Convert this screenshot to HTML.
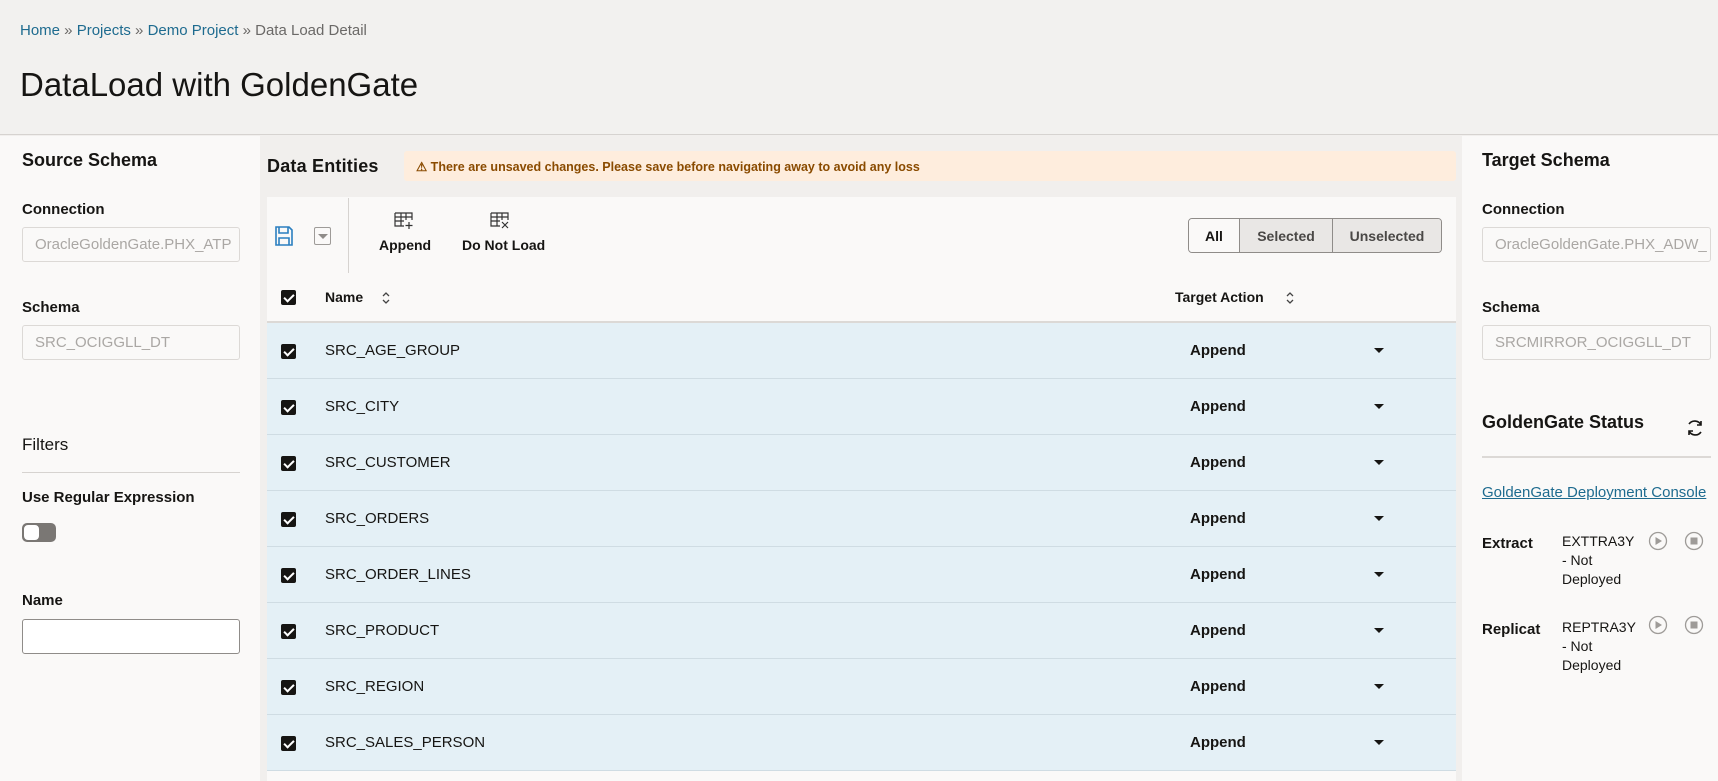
<!DOCTYPE html>
<html><head><meta charset="utf-8"><style>
*{box-sizing:border-box;margin:0;padding:0}
body{width:1718px;height:781px;overflow:hidden;font-family:"Liberation Sans",Arial,sans-serif;background:#f1efed;color:#161513;position:relative}
.abs{position:absolute}
.hdr{left:0;top:0;width:1718px;height:135px;background:#f2f1ef;border-bottom:1px solid #d6d3d0}
.bc{left:20px;top:22px;font-size:15px;color:#6b6967}
.bc a{color:#1e6b8f;text-decoration:none}
h1{position:absolute;left:20px;top:66px;font-size:33px;font-weight:normal;color:#161513}
.lp{left:0;top:136px;width:260px;height:645px;background:#faf9f8}
.rp{left:1462px;top:136px;width:256px;height:645px;background:#faf9f8}
.h2{font-size:18px;font-weight:bold}
.lbl{font-size:15px;font-weight:bold}
.inp{height:35px;border:1px solid #dcd9d6;border-radius:3px;background:#faf9f8;color:#aaa7a4;font-size:15px;padding:8px 12px;white-space:nowrap;overflow:hidden}
.warn{left:404px;top:151px;width:1052px;height:30px;background:#feeddd;border-radius:3px;color:#8a4b00;font-size:12.5px;font-weight:bold;padding:8px 12px}
.tb{left:267px;top:197px;width:1189px;height:584px;background:#faf9f8}
.row{position:absolute;left:267px;width:1189px;height:56px;background:#e4f0f6;border-bottom:1px solid #cfdce3}
.cb{position:absolute;left:14px;top:21px;width:15px;height:15px;background:#161513;border-radius:2px}
.cb:after{content:"";position:absolute;left:5px;top:2px;width:4px;height:8px;border:solid #fff;border-width:0 2px 2px 0;transform:rotate(45deg)}
.nm{position:absolute;left:58px;top:19px;font-size:15px}
.ap{position:absolute;left:923px;top:19px;font-size:15px;font-weight:bold}
.ar{position:absolute;left:1107px;top:25px;width:0;height:0;border-left:5px solid transparent;border-right:5px solid transparent;border-top:5px solid #161513}
.seg{left:1188px;top:218px;width:254px;height:35px;border:1px solid #8f8c89;border-radius:4px;display:flex;overflow:hidden;font-size:14px;font-weight:bold}
.seg div{display:flex;align-items:center;justify-content:center;border-left:1px solid #8f8c89;background:#e9e7e5;color:#4a4846}
</style></head><body>
<div class="abs hdr"></div>
<div class="abs bc"><a>Home</a> » <a>Projects</a> » <a>Demo Project</a> » Data Load Detail</div>
<h1>DataLoad with GoldenGate</h1>

<div class="abs lp"></div>
<div class="abs h2" style="left:22px;top:150px">Source Schema</div>
<div class="abs lbl" style="left:22px;top:201px">Connection</div>
<div class="abs inp" style="left:22px;top:227px;width:218px">OracleGoldenGate.PHX_ATP</div>
<div class="abs lbl" style="left:22px;top:299px">Schema</div>
<div class="abs inp" style="left:22px;top:325px;width:218px">SRC_OCIGGLL_DT</div>
<div class="abs" style="left:22px;top:435px;font-size:17px">Filters</div>
<div class="abs" style="left:22px;top:472px;width:218px;height:1px;background:#d6d3d0"></div>
<div class="abs lbl" style="left:22px;top:489px">Use Regular Expression</div>
<div class="abs" style="left:22px;top:523px;width:34px;height:19px;border-radius:5px;background:#7a7774"></div>
<div class="abs" style="left:23px;top:524px;width:17px;height:17px;border-radius:5px;background:#fff;border:1px solid #7a7774"></div>
<div class="abs lbl" style="left:22px;top:592px">Name</div>
<div class="abs" style="left:22px;top:619px;width:218px;height:35px;border:1px solid #8f8c89;border-radius:3px;background:#fff"></div>

<div class="abs" style="left:267px;top:156px;font-size:18px;font-weight:bold;letter-spacing:0.2px">Data Entities</div>
<div class="abs warn">⚠ There are unsaved changes. Please save before navigating away to avoid any loss</div>

<div class="abs tb"></div>
<svg class="abs" style="left:274px;top:225px" width="20" height="22" viewBox="0 0 20 22"><path d="M2 2h13l3 3v15H2z M5 2v6h9V2 M5 20v-7h10v7" fill="none" stroke="#2b7fc0" stroke-width="1.6"/></svg>
<div class="abs" style="left:314px;top:227px;width:17px;height:18px;border:1px solid #9e9b98;border-radius:2px"></div>
<div class="abs" style="left:318px;top:234px;border-left:5px solid transparent;border-right:5px solid transparent;border-top:5px solid #8f8c89"></div>
<div class="abs" style="left:348px;top:198px;width:1px;height:75px;background:#d6d3d0"></div>
<svg class="abs" style="left:394px;top:212px" width="22" height="18" viewBox="0 0 22 18"><path d="M1 1h17v7 M1 1v13h9 M1 5h17 M1 9h9 M7 1v13 M12 1v7 M15 10v7 M11.5 13.5h7" fill="none" stroke="#333" stroke-width="1.2"/></svg>
<div class="abs" style="left:379px;top:237px;font-size:14px;font-weight:bold">Append</div>
<svg class="abs" style="left:490px;top:212px" width="22" height="18" viewBox="0 0 22 18"><path d="M1 1h17v7 M1 1v13h9 M1 5h17 M1 9h9 M7 1v13 M12 1v7 M12 10l6 6 M18 10l-6 6" fill="none" stroke="#333" stroke-width="1.2"/></svg>
<div class="abs" style="left:462px;top:237px;font-size:14px;font-weight:bold">Do Not Load</div>
<div class="abs seg"><div style="width:50px;border-left:none;background:#faf9f8;color:#161513">All</div><div style="width:93px">Selected</div><div style="flex:1">Unselected</div></div>

<div class="abs" style="left:267px;top:270px;width:1189px;height:53px;border-bottom:2px solid #dcd9d6"></div>
<div class="abs cb" style="left:281px;top:290px"></div>
<div class="abs" style="left:325px;top:289px;font-size:14px;font-weight:bold">Name</div>
<svg class="abs" style="left:381px;top:290px" width="10" height="16" viewBox="0 0 10 16"><path d="M2 6l3-3 3 3 M2 10l3 3 3-3" fill="none" stroke="#444" stroke-width="1.3"/></svg>
<div class="abs" style="left:1175px;top:289px;font-size:14px;font-weight:bold">Target Action</div>
<svg class="abs" style="left:1285px;top:290px" width="10" height="16" viewBox="0 0 10 16"><path d="M2 6l3-3 3 3 M2 10l3 3 3-3" fill="none" stroke="#444" stroke-width="1.3"/></svg>

<div class="row" style="top:323px"><div class="cb"></div><div class="nm">SRC_AGE_GROUP</div><div class="ap">Append</div><div class="ar"></div></div>
<div class="row" style="top:379px"><div class="cb"></div><div class="nm">SRC_CITY</div><div class="ap">Append</div><div class="ar"></div></div>
<div class="row" style="top:435px"><div class="cb"></div><div class="nm">SRC_CUSTOMER</div><div class="ap">Append</div><div class="ar"></div></div>
<div class="row" style="top:491px"><div class="cb"></div><div class="nm">SRC_ORDERS</div><div class="ap">Append</div><div class="ar"></div></div>
<div class="row" style="top:547px"><div class="cb"></div><div class="nm">SRC_ORDER_LINES</div><div class="ap">Append</div><div class="ar"></div></div>
<div class="row" style="top:603px"><div class="cb"></div><div class="nm">SRC_PRODUCT</div><div class="ap">Append</div><div class="ar"></div></div>
<div class="row" style="top:659px"><div class="cb"></div><div class="nm">SRC_REGION</div><div class="ap">Append</div><div class="ar"></div></div>
<div class="row" style="top:715px"><div class="cb"></div><div class="nm">SRC_SALES_PERSON</div><div class="ap">Append</div><div class="ar"></div></div>

<div class="abs rp"></div>
<div class="abs h2" style="left:1482px;top:150px">Target Schema</div>
<div class="abs lbl" style="left:1482px;top:201px">Connection</div>
<div class="abs inp" style="left:1482px;top:227px;width:229px">OracleGoldenGate.PHX_ADW_</div>
<div class="abs lbl" style="left:1482px;top:299px">Schema</div>
<div class="abs inp" style="left:1482px;top:325px;width:229px">SRCMIRROR_OCIGGLL_DT</div>
<div class="abs h2" style="left:1482px;top:412px">GoldenGate Status</div>
<svg class="abs" style="left:1685px;top:418px" width="20" height="20" viewBox="0 0 20 20"><path d="M16 7a7 7 0 0 0-12-1 M4 13a7 7 0 0 0 12 1 M16 3v4h-4 M4 17v-4h4" fill="none" stroke="#161513" stroke-width="1.6"/></svg>
<div class="abs" style="left:1482px;top:456px;width:229px;height:2px;background:#dcd9d6"></div>
<div class="abs" style="left:1482px;top:484px;font-size:15px;color:#1e6b8f;text-decoration:underline">GoldenGate Deployment Console</div>
<div class="abs lbl" style="left:1482px;top:535px">Extract</div>
<div class="abs" style="left:1562px;top:532px;font-size:14px;line-height:19px">EXTTRA3Y<br>- Not<br>Deployed</div>
<div class="abs lbl" style="left:1482px;top:621px">Replicat</div>
<div class="abs" style="left:1562px;top:618px;font-size:14px;line-height:19px">REPTRA3Y<br>- Not<br>Deployed</div>
<svg class="abs" style="left:1648px;top:531px" width="60" height="20" viewBox="0 0 60 20"><circle cx="10" cy="10" r="8.5" fill="none" stroke="#9e9b98" stroke-width="1.3"/><path d="M7.5 6v8l6.5-4z" fill="#9e9b98"/><circle cx="46" cy="10" r="8.5" fill="none" stroke="#9e9b98" stroke-width="1.3"/><rect x="42.5" y="6.5" width="7" height="7" fill="#9e9b98"/></svg>
<svg class="abs" style="left:1648px;top:615px" width="60" height="20" viewBox="0 0 60 20"><circle cx="10" cy="10" r="8.5" fill="none" stroke="#9e9b98" stroke-width="1.3"/><path d="M7.5 6v8l6.5-4z" fill="#9e9b98"/><circle cx="46" cy="10" r="8.5" fill="none" stroke="#9e9b98" stroke-width="1.3"/><rect x="42.5" y="6.5" width="7" height="7" fill="#9e9b98"/></svg>
</body></html>
